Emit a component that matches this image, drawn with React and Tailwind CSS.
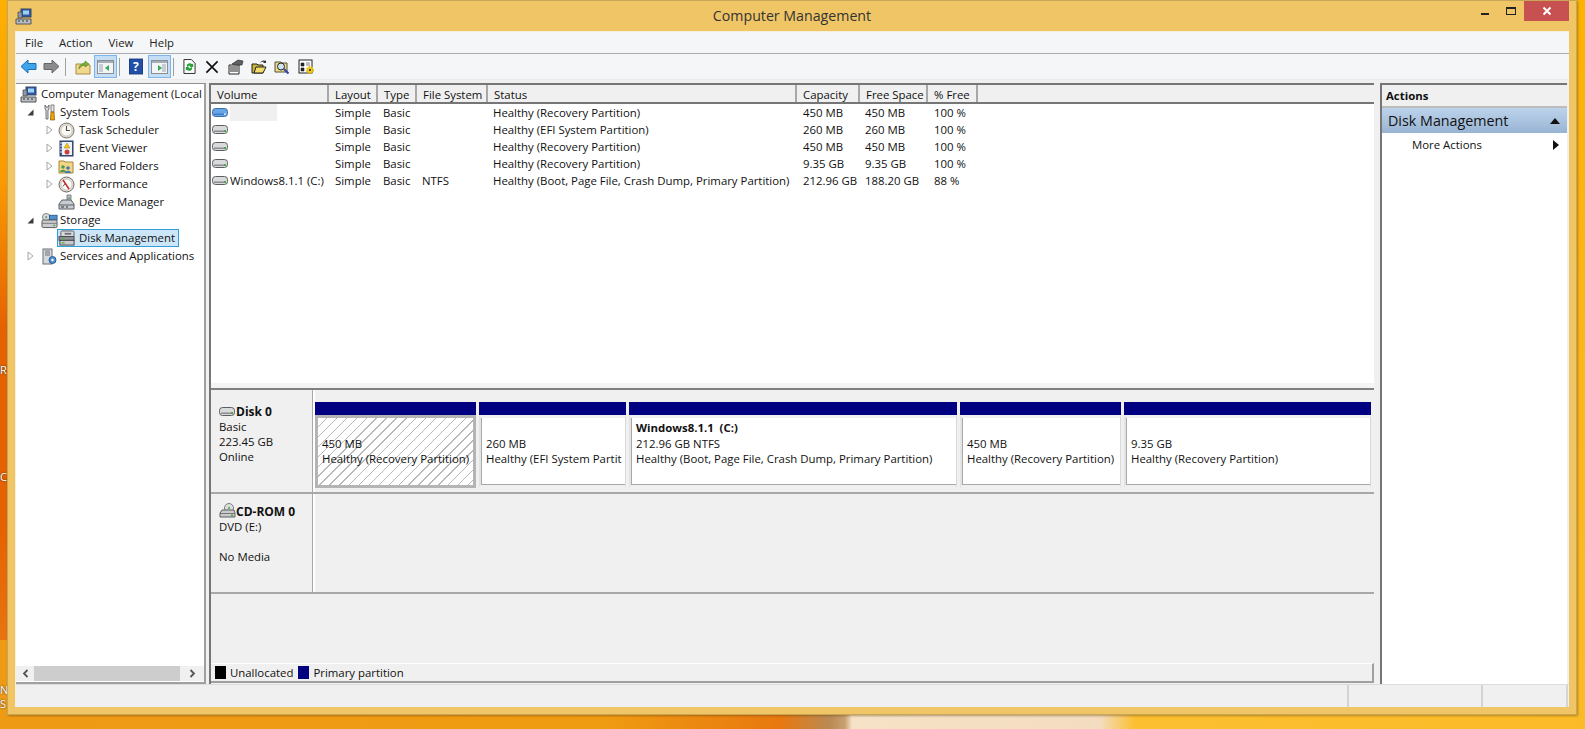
import React from "react";

const font = { fontFamily: '"Open Sans", "Noto Sans", sans-serif' };

// small hand drawn icons
const Computer = () => (
  <svg width="17" height="17" viewBox="0 0 17 17">
    <rect x="6" y="1" width="10" height="8" fill="#2c5aa8" stroke="#39465e" />
    <rect x="8" y="2.500" width="6" height="4" fill="#9fd0f5" />
    <path d="M3 4h4v6H3z" fill="#8d99a8" stroke="#444" strokeWidth=".7" />
    <path d="M1 11h15v5H1z" fill="#b9bec5" stroke="#555" />
    <path d="M3 13h2M7 13h2M11 13h2" stroke="#333" strokeWidth="1.200" />
  </svg>
);
const Tools = () => (
  <svg width="16" height="17" viewBox="0 0 16 17">
    <path d="M4 1v4l1 1v9h2V6l1-1V1L7 3H5z" fill="#d8dbe0" stroke="#55585e" strokeWidth=".8" />
    <rect x="10" y="1" width="3" height="7" fill="#e8e8e8" stroke="#555" strokeWidth=".7" />
    <path d="M10 8h3l.6 8h-4.200z" fill="#eda10e" stroke="#8a5a05" strokeWidth=".7" />
  </svg>
);
const Clock = () => (
  <svg width="17" height="17" viewBox="0 0 17 17">
    <circle cx="8.500" cy="8.500" r="7.500" fill="#e3dfd3" stroke="#77736a" />
    <circle cx="8.500" cy="8.500" r="5.500" fill="#fbfbf6" stroke="#b4b0a4" strokeWidth=".6" />
    <path d="M8.500 4v4.500H12" fill="none" stroke="#4a4a4a" strokeWidth="1.100" />
  </svg>
);
const EventViewer = () => (
  <svg width="16" height="17" viewBox="0 0 16 17">
    <rect x="2" y="1" width="13" height="15" fill="#3d5a96" stroke="#2b3b63" />
    <rect x="4" y="2" width="10" height="13" fill="#eef1f7" />
    <path d="M9 3l3 5H6z" fill="#f5c518" stroke="#a88206" strokeWidth=".5" />
    <circle cx="9" cy="12" r="2.500" fill="#c6413b" />
    <path d="M2 3h2M2 6h2M2 9h2M2 12h2" stroke="#fff" strokeWidth=".8" />
  </svg>
);
const SharedFolders = () => (
  <svg width="16" height="17" viewBox="0 0 16 17">
    <path d="M1 3h5l1 1h8v11H1z" fill="#f1d683" stroke="#a5863a" />
    <circle cx="5" cy="9" r="1.800" fill="#4a9a57" />
    <path d="M2 14c0-3 6-3 6 0z" fill="#4a9a57" />
    <circle cx="10" cy="10" r="1.800" fill="#3f78b8" />
    <path d="M7 15c0-3 6-3 6 0z" fill="#3f78b8" />
  </svg>
);
const Performance = () => (
  <svg width="17" height="17" viewBox="0 0 17 17">
    <circle cx="8.500" cy="8.500" r="7.500" fill="#e6e2da" stroke="#6e6a62" />
    <circle cx="8.500" cy="8.500" r="5.500" fill="#fff" stroke="#a7a39a" strokeWidth=".6" />
    <path d="M5 4l6 9" stroke="#c62f26" strokeWidth="1.600" />
    <path d="M5 10.500l2-3" stroke="#333" strokeWidth=".8" />
  </svg>
);
const DeviceManager = () => (
  <svg width="17" height="17" viewBox="0 0 17 17">
    <path d="M9 1h4v7H9z" fill="#c4c8ce" stroke="#63676d" strokeWidth=".8" />
    <path d="M4 6h9l3 4v5H1v-5z" fill="#c8ccd2" stroke="#5b5f66" />
    <path d="M1 11h15" stroke="#5b5f66" />
    <path d="M3 13h3M8 13h2" stroke="#333" />
    <circle cx="11" cy="4" r="1" fill="#5ca65c" />
  </svg>
);
const Storage = () => (
  <svg width="18" height="17" viewBox="0 0 18 17">
    <circle cx="5.500" cy="5" r="4" fill="#d6dadd" stroke="#7b8085" />
    <circle cx="5.500" cy="5" r="1.200" fill="#7b9b7b" />
    <rect x="9" y="3" width="8" height="5" fill="#4e8fd0" stroke="#2c5f95" />
    <rect x="1" y="8" width="16" height="8" rx="1.500" fill="#c9cdd1" stroke="#555" />
    <path d="M1 11.500h16" stroke="#777" />
    <rect x="13" y="13" width="2" height="1.500" fill="#4ca64c" />
  </svg>
);
const DiskMgmt = () => (
  <svg width="18" height="16" viewBox="0 0 19 17">
    <rect x="3" y="1" width="14" height="6" rx="1.500" fill="#d8dadc" stroke="#5a5c60" />
    <rect x="7" y="3" width="7" height="2" fill="#6f7276" />
    <rect x="1" y="7" width="16" height="4" fill="#8f9296" stroke="#44464a" />
    <rect x="2" y="11" width="15" height="5" fill="#c7c9cc" stroke="#44464a" />
    <rect x="4" y="8.500" width="3" height="1.500" fill="#55b04f" />
    <rect x="4" y="13" width="3" height="1.500" fill="#55b04f" />
  </svg>
);
const Services = () => (
  <svg width="16" height="17" viewBox="0 0 16 17">
    <rect x="2" y="1" width="9" height="15" fill="#d5d8dc" stroke="#6b7077" />
    <path d="M4 3h5M4 5h5M4 7h5" stroke="#70757c" />
    <circle cx="11.500" cy="12" r="3.500" fill="#4f8fd0" stroke="#2c5f95" />
    <circle cx="11.500" cy="12" r="1.200" fill="#fff" />
  </svg>
);
const Hdd = ({ blue }) => (
  <svg width="16" height="11" viewBox="0 0 16 11">
    <rect x=".5" y="1.500" width="15" height="8" rx="3" fill={blue ? "#68a6e6" : "#d8dadc"} stroke={blue ? "#3a6ea8" : "#5c5e60"} />
    <path d="M2 6.500h12V8H2z" fill={blue ? "#3f7cc2" : "#8b8d90"} />
    <rect x="12" y="6" width="2" height="2" fill={blue ? "#a8d4ff" : "#4ea64e"} />
  </svg>
);
const CdDrive = () => (
  <svg width="17" height="16" viewBox="0 0 17 16">
    <circle cx="10" cy="5" r="4.500" fill="#dcdfe0" stroke="#7a7e82" />
    <circle cx="10" cy="5" r="1.200" fill="#6dae6d" />
    <path d="M1 10l2-3h12l1 3v4H1z" fill="#c8cacc" stroke="#5c5e60" />
    <path d="M1 10.500h15" stroke="#76787a" />
    <rect x="12" y="11.500" width="2" height="1.500" fill="#4ea64e" />
  </svg>
);
const Collapse = () => (
  <svg width="7" height="7" viewBox="0 0 7 7">
    <path d="M6.500 .5v6h-6z" fill="#3c3c3c" />
  </svg>
);
const Expand = () => (
  <svg width="7" height="10" viewBox="0 0 7 10">
    <path d="M1 1l5 4-5 4z" fill="#fff" stroke="#a6a6a6" />
  </svg>
);

const treeRows = [
  { depth: 0, label: "Computer Management (Local", icon: <Computer /> },
  { depth: 1, label: "System Tools", icon: <Tools />, arrow: <Collapse /> },
  { depth: 2, label: "Task Scheduler", icon: <Clock />, arrow: <Expand /> },
  { depth: 2, label: "Event Viewer", icon: <EventViewer />, arrow: <Expand /> },
  { depth: 2, label: "Shared Folders", icon: <SharedFolders />, arrow: <Expand /> },
  { depth: 2, label: "Performance", icon: <Performance />, arrow: <Expand /> },
  { depth: 2, label: "Device Manager", icon: <DeviceManager /> },
  { depth: 1, label: "Storage", icon: <Storage />, arrow: <Collapse /> },
  { depth: 2, label: "Disk Management", icon: <DiskMgmt />, selected: true },
  { depth: 1, label: "Services and Applications", icon: <Services />, arrow: <Expand /> },
];

const columns = [
  { label: "Volume", w: "w-[118px]" },
  { label: "Layout", w: "w-[49px]" },
  { label: "Type", w: "w-[39px]" },
  { label: "File System", w: "w-[71px]" },
  { label: "Status", w: "w-[309px]" },
  { label: "Capacity", w: "w-[63px]" },
  { label: "Free Space", w: "w-[68px]" },
  { label: "% Free", w: "w-[50px]" },
];

const volumes = [
  { name: "", blue: true, status: "Healthy (Recovery Partition)", cap: "450 MB", free: "450 MB", pct: "100 %" },
  { name: "", status: "Healthy (EFI System Partition)", cap: "260 MB", free: "260 MB", pct: "100 %" },
  { name: "", status: "Healthy (Recovery Partition)", cap: "450 MB", free: "450 MB", pct: "100 %" },
  { name: "", status: "Healthy (Recovery Partition)", cap: "9.35 GB", free: "9.35 GB", pct: "100 %" },
  { name: "Windows8.1.1 (C:)", fs: "NTFS", status: "Healthy (Boot, Page File, Crash Dump, Primary Partition)", cap: "212.96 GB", free: "188.20 GB", pct: "88 %" },
];

const partitions = [
  { w: "w-[161px]", size: "450 MB", status: "Healthy (Recovery Partition)", hatched: true },
  { w: "w-[147px]", size: "260 MB", status: "Healthy (EFI System Partit" },
  { w: "w-[328px]", title: "Windows8.1.1  (C:)", size: "212.96 GB NTFS", status: "Healthy (Boot, Page File, Crash Dump, Primary Partition)" },
  { w: "w-[161px]", size: "450 MB", status: "Healthy (Recovery Partition)" },
  { w: "w-[247px]", size: "9.35 GB", status: "Healthy (Recovery Partition)" },
];

const TreeRow = ({ row }) => (
  <div className={`flex h-[18px] items-center ${row.depth === 0 ? "pl-[4px]" : row.depth === 1 ? "pl-[11px]" : "pl-[30px]"}`}>
    {row.depth === 1 && <span className="flex w-[14px] shrink-0 items-center">{row.arrow}</span>}
    {row.depth === 2 && <span className="flex w-[12px] shrink-0 items-center">{row.arrow}</span>}
    <span className={`flex h-[18px] items-center ${row.selected ? "-ml-px border border-[#2f9fd8] bg-[#cde6f7] pr-[3px]" : ""}`}>
      <span className={`flex shrink-0 items-center ${row.depth === 1 ? "w-[17px]" : "w-[19px]"}`}>{row.icon}</span>
      <span className="ml-[2px] whitespace-nowrap">{row.label}</span>
    </span>
  </div>
);

const Partition = ({ p }) => (
  <div className={`${p.w} mr-[3px] flex h-[86px] shrink-0 flex-col`}>
    <div className="h-[13px] bg-[#000080]" />
    {p.hatched ? (
      <div className="flex-1 border-[3px] border-[#b4b4b4] bg-[repeating-linear-gradient(135deg,#fff_0,#fff_6px,#b8b8b8_6px,#b8b8b8_7px)] pl-[4px] pt-[18px] leading-[15px]">
        <div>{p.size}</div>
        <div className="whitespace-nowrap">{p.status}</div>
      </div>
    ) : (
      <div className="flex-1 border-t-[3px] border-r border-b-[3px] border-l-[2px] border-t-[#f0f0f0] border-r-[#d8d8d8] border-b-[#f0f0f0] border-l-[#e3e3e3] bg-white pl-[5px] pt-[2px] leading-[15px] shadow-[inset_1px_0_0_#a8a8a8,inset_0_-1px_0_#a8a8a8]">
        <div className="h-[16px] whitespace-pre font-bold">{p.title}</div>
        <div>{p.size}</div>
        <div className="overflow-hidden whitespace-nowrap">{p.status}</div>
      </div>
    )}
  </div>
);

const ToolbarToggle = ({ children }) => (
  <span className="flex h-[23px] w-[23px] shrink-0 items-center justify-center border border-[#7eb4ea] bg-[#c4def5]">
    {children}
  </span>
);

const PaneGlyph = ({ side }) => (
  <svg width="17" height="14" viewBox="0 0 17 14">
    <rect x=".5" y=".5" width="16" height="13" fill="#f2f4f6" stroke="#8a8f96" />
    <rect x="1" y="1" width="15" height="2" fill="#a6adb6" />
    <rect x={side === "left" ? 2 : 11} y="4" width="4" height="8" fill="#c6ccd3" />
    <path d={side === "left" ? "M12 5v6l-4-3z" : "M7 5v6l4-3z"} fill="#3aa655" />
  </svg>
);

export default function App() {
  return (
    <div style={font} className="relative h-[729px] w-[1585px] overflow-hidden bg-[linear-gradient(90deg,#ee9a15_0,#f09c12_600px,#e8780f_780px,#b98a55_830px,#c9a070_845px,#f6e2c6_852px,#f4dcc0_1100px,#fbbf30_1135px,#fcbb28_1585px)] text-[11.4px] text-[#111]">
      {/* left edge of the wallpaper with cut off desktop labels */}
      <div className="absolute left-0 top-0 h-[640px] w-[8px] overflow-hidden bg-[linear-gradient(180deg,#fdb000_0,#fb9a00_180px,#e46200_330px,#e46200_520px,#e8740f_640px)] text-[11px] leading-[14px] text-white [text-shadow:0_0_2px_#222]">
        <div className="absolute top-[363px]">R</div>
        <div className="absolute top-[470px]">Co</div>
      </div>
      <div className="absolute left-0 top-[683px] w-[8px] overflow-hidden text-[11px] leading-[14px] text-white [text-shadow:0_0_2px_#222]">
        <div>N</div>
        <div>S</div>
      </div>
      <div className="absolute right-0 top-0 h-full w-[8px] bg-gradient-to-b from-[#fcb200] to-[#fbbb28]" />

      <div className="relative ml-[7px] flex h-[715px] w-[1570px] flex-col border border-[#c8a659] bg-[#f0c566] px-[7px] pb-[7px] shadow-[1px_1px_2px_rgba(80,50,0,0.4)]">
        {/* title bar */}
        <div className="flex h-[30px] shrink-0 items-start">
          <span className="mt-[7px] shrink-0"><Computer /></span>
          <div className="flex-1 pl-[81px] pt-[5px] text-center text-[14.2px] leading-[20px] text-[#333]">Computer Management</div>
          <div className="flex items-start">
            <div className="flex h-[21px] w-[27px] items-end justify-center pb-[7px]">
              <span className="h-[2px] w-[8px] bg-[#222]" />
            </div>
            <div className="flex h-[21px] w-[26px] items-center justify-center pb-[2px]">
              <span className="h-[8px] w-[10px] border border-t-2 border-[#222]" />
            </div>
            <div className="flex h-[20px] w-[45px] items-center justify-center bg-[#c75050] text-white">
              <svg width="10" height="10" viewBox="0 0 10 10"><path d="M1.500 1.500l7 7M8.500 1.500l-7 7" stroke="#fff" strokeWidth="2" /></svg>
            </div>
          </div>
        </div>

        {/* client area */}
        <div className="flex min-h-0 flex-1 flex-col border-t border-l border-[#f7efdb] bg-[#f0f0f0]">
          <div className="flex h-[22px] shrink-0 items-center gap-[16px] border-b border-[#a9acb0] bg-[#f5f6f7] pl-[9px] text-[#222]">
            <span>File</span>
            <span>Action</span>
            <span>View</span>
            <span>Help</span>
          </div>
          <div className="flex h-[26px] shrink-0 items-center border-b border-[#ebebeb] bg-[#f5f6f7] pl-[4px]">
            <svg width="17" height="15" viewBox="0 0 17 15"><path d="M8 1L1 7.500 8 14v-3.500h8v-6H8z" fill="#3fa4ea" stroke="#1b6fb5" /></svg>
            <svg className="ml-[6px]" width="17" height="15" viewBox="0 0 17 15"><path d="M9 1l7 6.500L9 14v-3.500H1v-6h8z" fill="#8b8b8b" stroke="#666" /></svg>
            <span className="ml-[5px] mr-[9px] h-[18px] w-px bg-[#a0a0a0]" />
            <svg className="mr-[3px]" width="16" height="16" viewBox="0 0 16 16">
              <path d="M1 5h5l1 1h8v9H1z" fill="#f2d88d" stroke="#a88c45" />
              <path d="M4 10c0-4 3-6 6-6V2l4 3-4 3V6c-2 0-4 1-6 4z" fill="#7bb23a" stroke="#4f7d1e" strokeWidth=".6" />
            </svg>
            <ToolbarToggle><PaneGlyph side="left" /></ToolbarToggle>
            <span className="ml-[2px] mr-[9px] h-[18px] w-px bg-[#a0a0a0]" />
            <svg className="mr-[5px]" width="14" height="17" viewBox="0 0 15 17">
              <rect x=".5" y=".5" width="14" height="16" fill="#1f4fa8" stroke="#173a7d" />
              <text x="7.500" y="13" textAnchor="middle" fontSize="13" fontWeight="700" fill="#fff">?</text>
            </svg>
            <ToolbarToggle><PaneGlyph side="right" /></ToolbarToggle>
            <span className="ml-[2px] mr-[9px] h-[18px] w-px bg-[#a0a0a0]" />
            <svg className="mr-[9px]" width="13" height="17" viewBox="0 0 14 17">
              <path d="M1 1h8l4 4v11H1z" fill="#fff" stroke="#222" />
              <path d="M4 8c0-3 4-4 6-2l1-1v4H7l1-1c-1-1-2 0-3 1zM10 10c0 3-4 4-6 2l-1 1V9h4l-1 1c1 1 2 0 3-1z" fill="#28a038" />
            </svg>
            <svg className="mr-[9px]" width="14" height="14" viewBox="0 0 15 15"><path d="M1.500 1.500l12 12M13.500 1.500l-12 12" stroke="#111" strokeWidth="1.800" /></svg>
            <svg className="mr-[7px]" width="16" height="16" viewBox="0 0 16 16">
              <path d="M1 6h10v9H1z" fill="#fff" stroke="#222" />
              <path d="M2 8h8M2 10h8M2 12h8" stroke="#222" />
              <path d="M4 5l6-4 5 1-1 4-6 0z" fill="#5d6066" stroke="#222" strokeWidth=".6" />
            </svg>
            <svg className="mr-[7px]" width="16" height="15" viewBox="0 0 16 15">
              <path d="M1 5h5l1 1h5v8H1z" fill="#c9b43a" stroke="#222" />
              <path d="M3 14l2-6h10l-3 6z" fill="#efdc6a" stroke="#222" />
              <path d="M9 4c1-2 3-3 5-2l1-1v3h-3l1-1c-1-.5-3 0-4 1z" fill="#333" />
            </svg>
            <svg className="mr-[8px]" width="16" height="16" viewBox="0 0 16 16">
              <path d="M1 3h6l1 1h5v9H1z" fill="#efdc8a" stroke="#55503a" />
              <circle cx="7" cy="7.500" r="3.500" fill="#cde6f7" stroke="#222" />
              <path d="M10 10l4.500 4.500" stroke="#2b45a8" strokeWidth="2" />
            </svg>
            <svg width="17" height="16" viewBox="0 0 17 16">
              <rect x="1" y="1" width="13" height="13" fill="#fff" stroke="#222" />
              <path d="M3 4h3v3H3zM8 4h4M8 6h4M3 9h3v3H3z" fill="#222" stroke="#222" strokeWidth=".6" />
              <circle cx="12" cy="11" r="3" fill="#f0cf2c" stroke="#e5b80c" strokeWidth="2" strokeDasharray="1.500 1" />
              <circle cx="12" cy="11" r="1" fill="#222" />
            </svg>
          </div>

          <div className="flex min-h-0 flex-1 pt-[3px]">
            {/* tree pane */}
            <div className="flex w-[190px] shrink-0 flex-col border-t border-r-2 border-b-2 border-[#a0a0a0] border-t-[#909090] bg-white">
              <div className="min-h-0 flex-1 pt-px">
                {treeRows.map((row) => <TreeRow key={row.label} row={row} />)}
              </div>
              <div className="mb-[1px] flex h-[15px] items-center bg-[#f0f0f0]">
                <span className="flex w-[18px] justify-center">
                  <svg width="7" height="9" viewBox="0 0 7 9"><path d="M5.500 1L2 4.500 5.500 8" fill="none" stroke="#555" strokeWidth="1.800" /></svg>
                </span>
                <span className="h-full w-[146px] bg-[#cdcdcd]" />
                <span className="flex flex-1 justify-center">
                  <svg width="7" height="9" viewBox="0 0 7 9"><path d="M1.500 1L5 4.500 1.500 8" fill="none" stroke="#555" strokeWidth="1.800" /></svg>
                </span>
              </div>
            </div>

            {/* center pane */}
            <div className="ml-[3px] flex min-w-0 flex-1 flex-col border-t-2 border-l-2 border-[#767676]">
              <div className="h-[298px] shrink-0 bg-white">
                <div className="flex h-[19px] border-b-2 border-[#767676] bg-[#f0f0f0] leading-[19px]">
                  {columns.map((c) => (
                    <div key={c.label} className={`${c.w} shrink-0 whitespace-nowrap border-r-2 border-[#a8a8a8] pl-[6px]`}>{c.label}</div>
                  ))}
                </div>
                {volumes.map((v, i) => (
                  <div key={i} className="flex h-[17px] items-center">
                    <div className="flex w-[118px] shrink-0 items-center pl-[1px]">
                      <Hdd blue={v.blue} />
                      {v.blue ? <span className="ml-[2px] h-[17px] w-[47px] bg-[#f0f0f0]" /> : <span className="ml-[2px] whitespace-nowrap">{v.name}</span>}
                    </div>
                    <div className="w-[49px] shrink-0 pl-[6px]">Simple</div>
                    <div className="w-[39px] shrink-0 pl-[5px]">Basic</div>
                    <div className="w-[71px] shrink-0 pl-[5px]">{v.fs}</div>
                    <div className="w-[309px] shrink-0 whitespace-nowrap pl-[5px]">{v.status}</div>
                    <div className="w-[63px] shrink-0 whitespace-nowrap pl-[6px]">{v.cap}</div>
                    <div className="w-[68px] shrink-0 whitespace-nowrap pl-[5px]">{v.free}</div>
                    <div className="w-[50px] shrink-0 pl-[6px]">{v.pct}</div>
                  </div>
                ))}
              </div>
              <div className="h-[5px] shrink-0 bg-[#f4f4f4]" />
              <div className="flex min-h-0 flex-1 flex-col border-t-2 border-[#808080] bg-[#f0f0f0] leading-[15px]">
                <div className="flex h-[104px] shrink-0 border-b-2 border-[#a8a8a8]">
                  <div className="w-[104px] shrink-0 border-r-2 border-white pl-[8px] pt-[13px] shadow-[inset_-1px_0_0_#a8a8a8]">
                    <div className="flex h-[16px] items-center text-[12px] font-bold"><Hdd /><span className="ml-px">Disk 0</span></div>
                    <div>Basic</div>
                    <div>223.45 GB</div>
                    <div>Online</div>
                  </div>
                  <div className="flex pt-[12px]">
                    {partitions.map((p) => <Partition key={p.w + p.size} p={p} />)}
                  </div>
                </div>
                <div className="flex h-[100px] shrink-0 border-b-2 border-[#a8a8a8]">
                  <div className="w-[104px] shrink-0 border-r-2 border-white pl-[8px] pt-[9px] shadow-[inset_-1px_0_0_#a8a8a8]">
                    <div className="flex h-[16px] items-center text-[12px] font-bold"><CdDrive /><span>CD-ROM 0</span></div>
                    <div>DVD (E:)</div>
                    <div className="mt-[15px]">No Media</div>
                  </div>
                </div>
                <div className="flex-1" />
                <div className="mb-[1px] flex h-[20px] shrink-0 items-center gap-[4px] border-t border-r-2 border-b-2 border-t-white border-r-[#a0a0a0] border-b-[#a0a0a0] pl-[4px]">
                  <span className="h-[13px] w-[11px] bg-black" />
                  <span className="mr-[1px]">Unallocated</span>
                  <span className="h-[13px] w-[11px] bg-[#000080]" />
                  <span>Primary partition</span>
                </div>
              </div>
            </div>

            {/* actions pane */}
            <div className="ml-[6px] mr-[2px] flex w-[187px] shrink-0 flex-col border-t-2 border-l-2 border-[#767676] bg-white">
              <div className="flex h-[23px] shrink-0 items-center border-b-2 border-[#bdbdbd] bg-[#f0f0f0] pl-[4px] font-bold">Actions</div>
              <div className="flex h-[25px] shrink-0 items-center justify-between bg-gradient-to-b from-[#bdd3ec] to-[#98b4d3] pl-[6px] pr-[7px] text-[14.3px]">
                <span>Disk Management</span>
                <svg width="10" height="6" viewBox="0 0 10 6"><path d="M5 0l5 6H0z" fill="#111" /></svg>
              </div>
              <div className="flex h-[23px] shrink-0 items-center justify-between pl-[30px] pr-[8px]">
                <span>More Actions</span>
                <svg width="6" height="10" viewBox="0 0 6 10"><path d="M0 0l6 5-6 5z" fill="#111" /></svg>
              </div>
            </div>
          </div>

          {/* status bar */}
          <div className="flex h-[23px] shrink-0 border-t border-[#dcdcdc] bg-[#f0f0f0]">
            <div className="w-[1333px] border-r-2 border-[#d4d4d4]" />
            <div className="w-[134px] border-r-2 border-[#d4d4d4]" />
            <div className="w-[85px] border-r-2 border-[#d4d4d4]" />
          </div>
        </div>
      </div>
    </div>
  );
}
